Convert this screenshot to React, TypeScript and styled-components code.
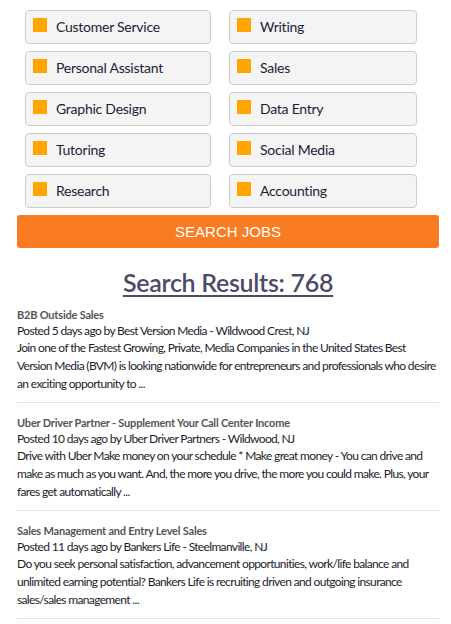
import React from "react";
import styled, { createGlobalStyle } from "styled-components";

const GlobalStyle = createGlobalStyle`
	html, body {
		margin: 0;
		padding: 0;
		background: #ffffff;
	}

	body {
		font-family: Lato, "Open Sans", sans-serif;
	}
`;

const Page = styled("div")`
	padding: 10px 12px 0 17px;
	width: 422px;
`;

const CategoryGrid = styled("div")`
	display: grid;
	grid-template-columns: 186px 188px;
	column-gap: 18px;
	row-gap: 7px;
	padding-left: 8px;
`;

const Category = styled("label")`
	align-items: center;
	background: #f4f4f4;
	border: 1px solid #cccccc;
	border-radius: 4px;
	box-sizing: border-box;
	color: #1c1c3a;
	display: flex;
	font-size: 14px;
	height: 34px;
	letter-spacing: -0.25px;
	padding: 0 0 1px 7px;
`;

const Marker = styled("span")`
	background: #ffa500;
	display: inline-block;
	flex: none;
	height: 14px;
	margin: -4px 9px 0 0;
	width: 14px;
`;

const SearchButton = styled("button")`
	background: #f97b22;
	border: none;
	border-radius: 3px;
	color: #ffffff;
	cursor: pointer;
	display: block;
	font-family: "Liberation Sans", Arial, sans-serif;
	font-size: 15px;
	height: 33px;
	margin-top: 7px;
	padding: 0;
	width: 422px;
`;

const Heading = styled("h2")`
	color: #4b4b68;
	font-size: 25px;
	font-weight: 600;
	letter-spacing: -0.3px;
	line-height: 30px;
	margin: 19px 0 7px;
	text-align: center;

	span {
		text-decoration: underline;
		text-decoration-thickness: 2px;
		text-underline-offset: 3px;
	}
`;

const Results = styled("ul")`
	list-style: none;
	margin: 0;
	padding: 0;
`;

const Result = styled("li")`
	border-bottom: 1px solid #e4e4e4;
	padding: 12px 0 9px;

	&:first-child {
		padding-top: 3px;
	}
`;

const ResultTitle = styled("div")`
	color: #555555;
	font-size: 11px;
	font-weight: 700;
	letter-spacing: -0.2px;
	line-height: 16px;
`;

const ResultMeta = styled("div")`
	color: #1c1c2c;
	font-size: 12px;
	letter-spacing: -0.65px;
	line-height: 16px;
`;

const ResultBody = styled("p")`
	color: #1c1c2c;
	font-size: 12px;
	letter-spacing: -0.65px;
	line-height: 18px;
	margin: 0;
`;

const categories = [
	"Customer Service",
	"Writing",
	"Personal Assistant",
	"Sales",
	"Graphic Design",
	"Data Entry",
	"Tutoring",
	"Social Media",
	"Research",
	"Accounting",
];

const jobs = [
	{
		title: "B2B Outside Sales",
		meta: "Posted 5 days ago by Best Version Media - Wildwood Crest, NJ",
		body: "Join one of the Fastest Growing, Private, Media Companies in the United States Best Version Media (BVM) is looking nationwide for entrepreneurs and professionals who desire an exciting opportunity to ...",
	},
	{
		title: "Uber Driver Partner - Supplement Your Call Center Income",
		meta: "Posted 10 days ago by Uber Driver Partners - Wildwood, NJ",
		body: "Drive with Uber Make money on your schedule * Make great money - You can drive and make as much as you want. And, the more you drive, the more you could make. Plus, your fares get automatically ...",
	},
	{
		title: "Sales Management and Entry Level Sales",
		meta: "Posted 11 days ago by Bankers Life - Steelmanville, NJ",
		body: "Do you seek personal satisfaction, advancement opportunities, work/life balance and unlimited earning potential? Bankers Life is recruiting driven and outgoing insurance sales/sales management ...",
	},
];

const App = (): React.ReactElement => (
	<>
		<GlobalStyle />
		<Page>
			<CategoryGrid>
				{categories.map(name => (
					<Category key={name}>
						<Marker />
						{name}
					</Category>
				))}
			</CategoryGrid>

			<SearchButton>SEARCH JOBS</SearchButton>

			<Heading>
				<span>Search Results: 768</span>
			</Heading>

			<Results>
				{jobs.map(job => (
					<Result key={job.title}>
						<ResultTitle>{job.title}</ResultTitle>
						<ResultMeta>{job.meta}</ResultMeta>
						<ResultBody>{job.body}</ResultBody>
					</Result>
				))}
			</Results>
		</Page>
	</>
);

export default App;
